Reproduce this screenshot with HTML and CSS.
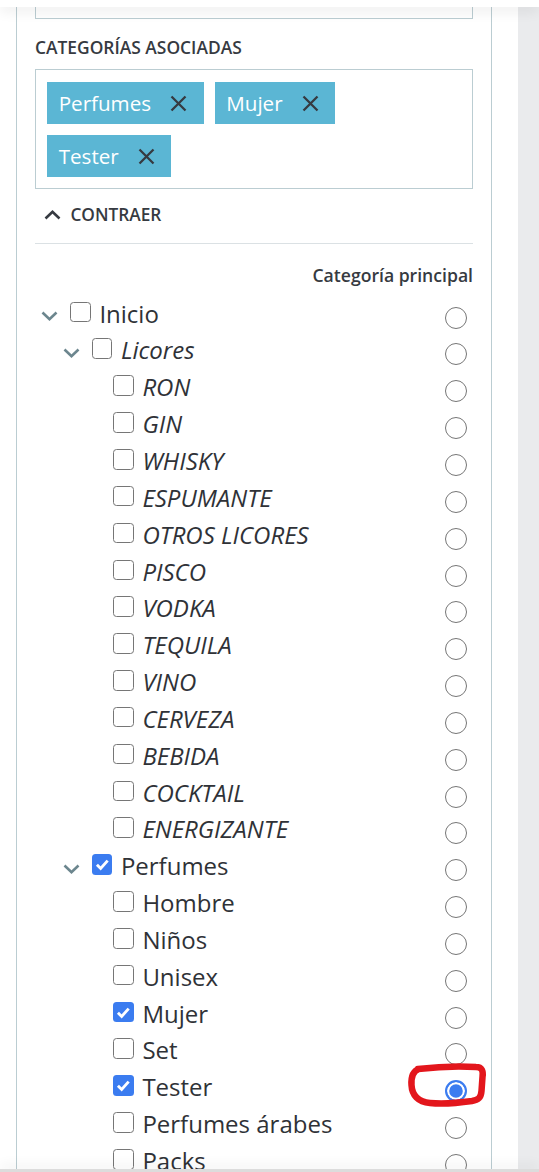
FILE: index.html
```html
<!DOCTYPE html>
<html lang="es">
<head>
<meta charset="utf-8">
<title>Categorías asociadas</title>
<link rel="stylesheet" href="styles.css">
</head>
<body>
<div class="topbar"></div>
<div class="page">
  <main class="main">
    <section class="card">
      <div class="field"></div>
      <h3 class="label">CATEGORÍAS ASOCIADAS</h3>
      <div class="tags">
        <span class="tag">Perfumes<svg class="x" viewBox="0 0 17 17"><path d="M1.5 1.5L15.5 15.5M15.5 1.5L1.5 15.5"/></svg></span>
        <span class="tag">Mujer<svg class="x" viewBox="0 0 17 17"><path d="M1.5 1.5L15.5 15.5M15.5 1.5L1.5 15.5"/></svg></span>
        <span class="tag">Tester<svg class="x" viewBox="0 0 17 17"><path d="M1.5 1.5L15.5 15.5M15.5 1.5L1.5 15.5"/></svg></span>
      </div>
      <div class="collapse"><svg class="up" viewBox="0 0 17 10"><path d="M1.5 8.5L8.5 1.8L15.5 8.5"/></svg>CONTRAER</div>
      <div class="sep"></div>
      <div class="main-cat">Categoría principal</div>
      <ul class="tree">
        <li class="row l0"><span class="chev"><svg viewBox="0 0 17 10"><path d="M1.5 1.5L8.5 8.2L15.5 1.5"/></svg></span><span class="cb"></span><span class="name">Inicio</span><span class="radio"></span></li>
        <li class="row l1"><span class="chev"><svg viewBox="0 0 17 10"><path d="M1.5 1.5L8.5 8.2L15.5 1.5"/></svg></span><span class="cb"></span><span class="name it">Licores</span><span class="radio"></span></li>
        <li class="row l2"><span class="chev"></span><span class="cb"></span><span class="name it">RON</span><span class="radio"></span></li>
        <li class="row l2"><span class="chev"></span><span class="cb"></span><span class="name it">GIN</span><span class="radio"></span></li>
        <li class="row l2"><span class="chev"></span><span class="cb"></span><span class="name it">WHISKY</span><span class="radio"></span></li>
        <li class="row l2"><span class="chev"></span><span class="cb"></span><span class="name it">ESPUMANTE</span><span class="radio"></span></li>
        <li class="row l2"><span class="chev"></span><span class="cb"></span><span class="name it">OTROS LICORES</span><span class="radio"></span></li>
        <li class="row l2"><span class="chev"></span><span class="cb"></span><span class="name it">PISCO</span><span class="radio"></span></li>
        <li class="row l2"><span class="chev"></span><span class="cb"></span><span class="name it">VODKA</span><span class="radio"></span></li>
        <li class="row l2"><span class="chev"></span><span class="cb"></span><span class="name it">TEQUILA</span><span class="radio"></span></li>
        <li class="row l2"><span class="chev"></span><span class="cb"></span><span class="name it">VINO</span><span class="radio"></span></li>
        <li class="row l2"><span class="chev"></span><span class="cb"></span><span class="name it">CERVEZA</span><span class="radio"></span></li>
        <li class="row l2"><span class="chev"></span><span class="cb"></span><span class="name it">BEBIDA</span><span class="radio"></span></li>
        <li class="row l2"><span class="chev"></span><span class="cb"></span><span class="name it">COCKTAIL</span><span class="radio"></span></li>
        <li class="row l2"><span class="chev"></span><span class="cb"></span><span class="name it">ENERGIZANTE</span><span class="radio"></span></li>
        <li class="row l1"><span class="chev"><svg viewBox="0 0 17 10"><path d="M1.5 1.5L8.5 8.2L15.5 1.5"/></svg></span><span class="cb checked"><svg viewBox="0 0 20 20"><path d="M4.8 10.4L8.4 14L15.2 6.4"/></svg></span><span class="name">Perfumes</span><span class="radio"></span></li>
        <li class="row l2"><span class="chev"></span><span class="cb"></span><span class="name">Hombre</span><span class="radio"></span></li>
        <li class="row l2"><span class="chev"></span><span class="cb"></span><span class="name">Niños</span><span class="radio"></span></li>
        <li class="row l2"><span class="chev"></span><span class="cb"></span><span class="name">Unisex</span><span class="radio"></span></li>
        <li class="row l2"><span class="chev"></span><span class="cb checked"><svg viewBox="0 0 20 20"><path d="M4.8 10.4L8.4 14L15.2 6.4"/></svg></span><span class="name">Mujer</span><span class="radio"></span></li>
        <li class="row l2"><span class="chev"></span><span class="cb"></span><span class="name">Set</span><span class="radio"></span></li>
        <li class="row l2"><span class="chev"></span><span class="cb checked"><svg viewBox="0 0 20 20"><path d="M4.8 10.4L8.4 14L15.2 6.4"/></svg></span><span class="name">Tester</span><span class="radio on"></span></li>
        <li class="row l2"><span class="chev"></span><span class="cb"></span><span class="name">Perfumes árabes</span><span class="radio"></span></li>
        <li class="row l2"><span class="chev"></span><span class="cb"></span><span class="name">Packs</span><span class="radio"></span></li>
      </ul>
    </section>
  </main>
  <aside class="strip"></aside>
  <svg class="mark" viewBox="0 0 90 60"><path d="M18 14C35 12 60 11 76 12C82 12 83.5 16 82.5 22L81.5 36C81 43 78 45 72 46C58 48 40 49 30 48C18 47 12 40 11.5 30C11 22 13 16 19 14"/></svg>
</div>
<div class="bottombar"></div>
</body>
</html>
```

FILE: styles.css
```css
* { box-sizing: border-box; }

html, body {
  margin: 0;
  padding: 0;
  background: #fff;
}

body {
  font-family: "Open Sans", "Noto Sans", "Liberation Sans", sans-serif;
  color: #363a41;
  overflow: hidden;
}

.topbar {
  position: fixed;
  top: 0;
  left: 0;
  right: 0;
  height: 7px;
  background: #fff;
  box-shadow: 0 3px 14px rgba(0, 0, 0, 0.11);
  z-index: 10;
}

.bottombar {
  position: fixed;
  left: 0;
  right: 0;
  bottom: 0;
  height: 3px;
  background: #dcdcdc;
  box-shadow: 0 -3px 12px rgba(0, 0, 0, 0.12);
  z-index: 10;
}

.page {
  position: relative;
  display: flex;
  min-height: 100vh;
}

.main {
  flex: 1;
  padding: 0 26px 0 16px;
}

.strip {
  width: 21px;
  flex: none;
  background: #eaebed;
}

.card {
  border-left: 1px solid #bbcdd2;
  border-right: 1px solid #bbcdd2;
  padding: 0 18px 0 18px;
}

.field {
  height: 19px;
  border: 1px solid #bbcdd2;
  border-top: none;
}

.label {
  margin: 16px 0 10px;
  font-size: 17.4px;
  line-height: 24px;
  font-weight: 600;
  color: #363a41;
}

.tags {
  border: 1px solid #bbcdd2;
  padding: 12px 11px 11px 11px;
  display: flex;
  flex-wrap: wrap;
  gap: 11px 11px;
}

.tag {
  display: inline-flex;
  align-items: center;
  height: 42px;
  padding: 0 16.5px 0 11.7px;
  background: #5bb6d4;
  color: #fff;
  font-size: 20.6px;
  line-height: 1;
}

.tag .x {
  width: 17px;
  height: 17px;
  margin-left: 19px;
  fill: none;
  stroke: #363a41;
  stroke-width: 2.3;
}

.collapse {
  display: flex;
  align-items: center;
  margin: 13.5px 0 16.5px;
  padding-left: 8.7px;
  font-size: 17.3px;
  line-height: 24px;
  font-weight: 600;
  color: #363a41;
}

.collapse .up {
  width: 17px;
  height: 10px;
  margin-right: 9.7px;
  margin-top: 1px;
  fill: none;
  stroke: #363a41;
  stroke-width: 2.6;
}

.sep {
  height: 1px;
  background: #dbe1e4;
}

.main-cat {
  margin: 19px 0 8.6px;
  text-align: right;
  font-size: 17.6px;
  line-height: 24px;
  font-weight: 600;
  color: #363a41;
}

.tree {
  list-style: none;
  margin: 0;
  padding: 0;
}

.row {
  display: flex;
  align-items: flex-start;
  height: 36.85px;
}

.l0 { padding-left: 6px; }
.l1 { padding-left: 27.5px; }
.l2 { padding-left: 49px; }

.chev {
  flex: none;
  width: 29.2px;
}

.chev svg {
  display: block;
  width: 17px;
  height: 10px;
  margin-top: 15.5px;
  fill: none;
  stroke: #6c868e;
  stroke-width: 2.6;
}

.cb {
  flex: none;
  width: 20.6px;
  height: 20.6px;
  margin-top: 6px;
  margin-right: 8.6px;
  border: 1.6px solid #767676;
  border-radius: 3.5px;
  background: #fff;
}

.cb.checked {
  border: none;
  background: #3b7cf0;
}

.cb svg {
  display: block;
  width: 20.6px;
  height: 20.6px;
  fill: none;
  stroke: #fff;
  stroke-width: 2.8;
}

.name {
  flex: 1;
  font-size: 24px;
  line-height: 36.85px;
  white-space: nowrap;
  color: #2f3237;
}

.name.it {
  font-style: italic;
}

.radio {
  flex: none;
  width: 22px;
  height: 22px;
  margin-top: 11px;
  margin-right: 5.8px;
  border: 1.6px solid #767676;
  border-radius: 50%;
  background: #fff;
}

.radio.on {
  border: 2px solid #3b7cf0;
  background: #3b7cf0;
  box-shadow: inset 0 0 0 2.2px #fff;
}

.mark {
  position: absolute;
  left: 400px;
  top: 1055px;
  width: 90px;
  height: 60px;
  fill: none;
  stroke: #e3161c;
  stroke-width: 6.5;
  stroke-linecap: round;
  stroke-linejoin: round;
  z-index: 5;
}
```
